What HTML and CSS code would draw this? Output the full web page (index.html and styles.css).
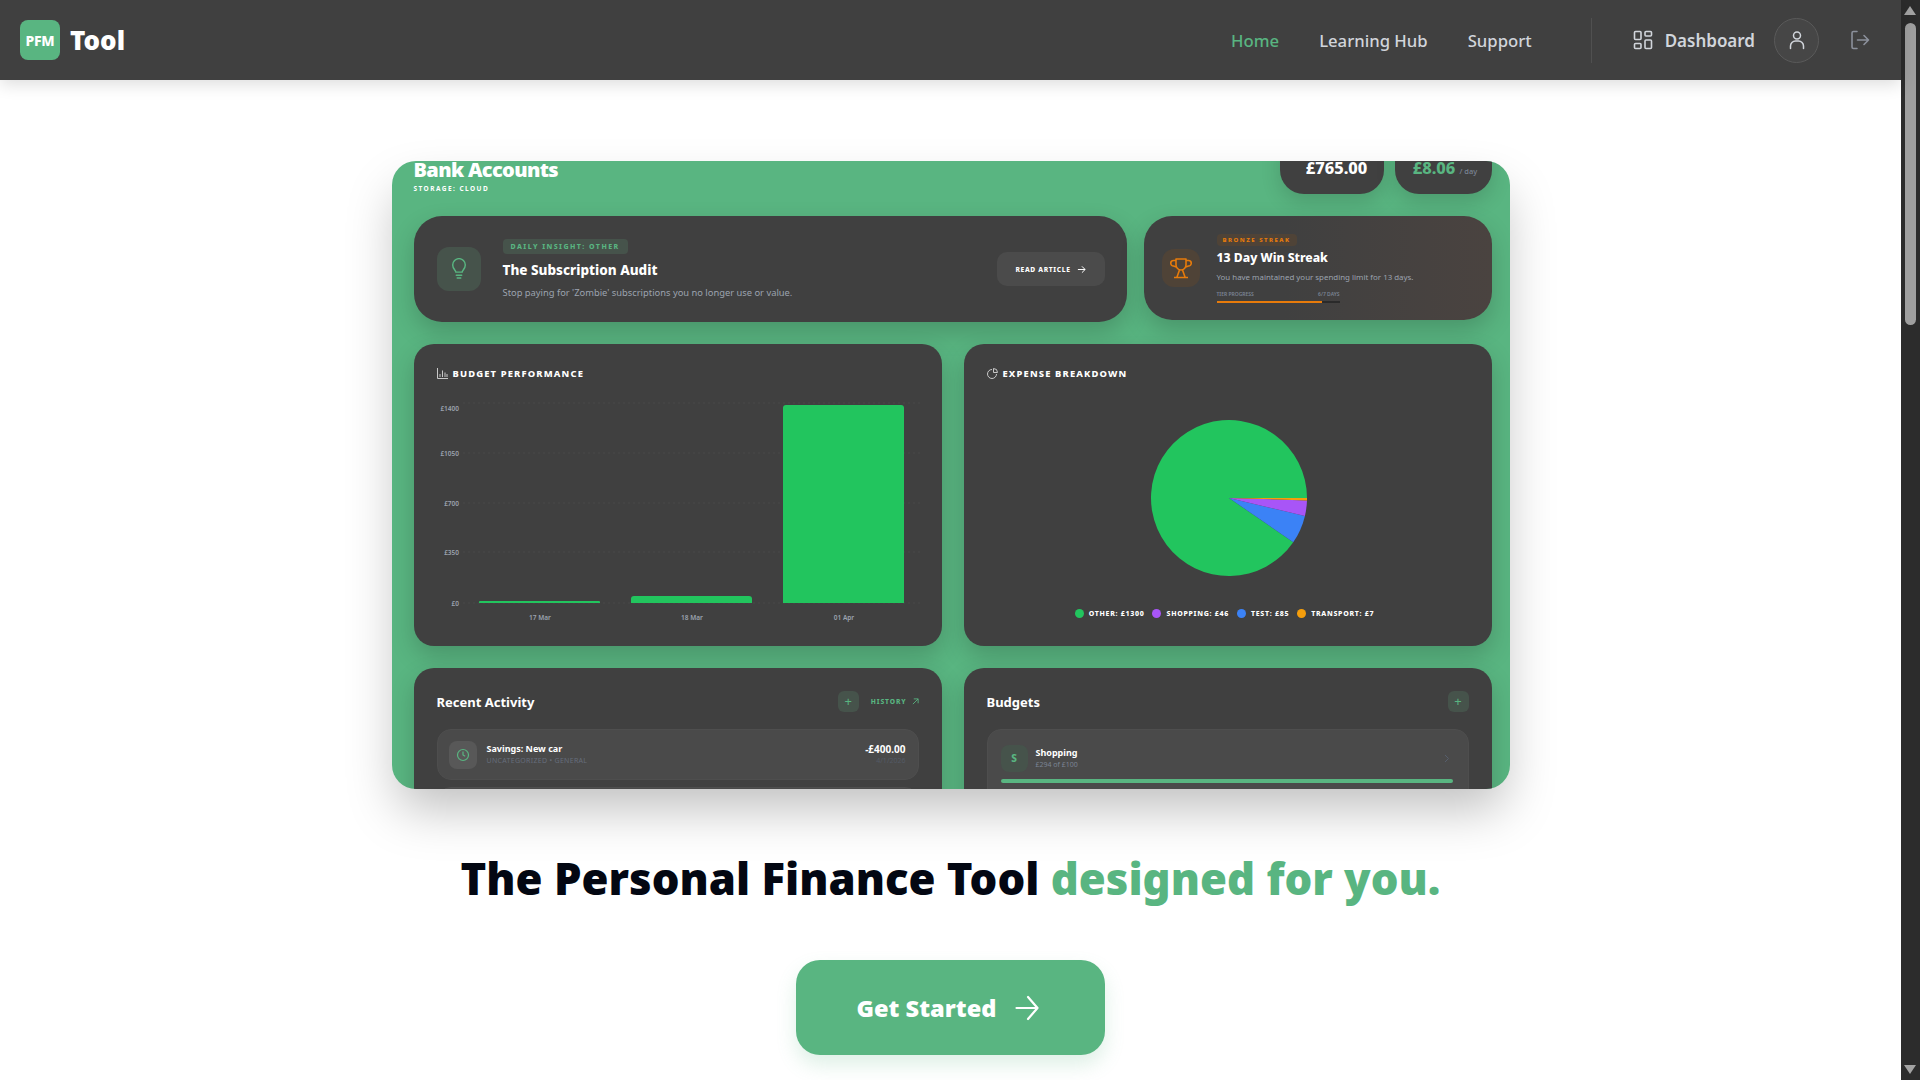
FILE: index.html
```html
<!DOCTYPE html>
<html lang="en">
<head>
    <meta charset="UTF-8">
    <meta name="viewport" content="width=device-width, initial-scale=1.0">
    <title>PFM Tool</title>
    <link rel="stylesheet" href="styles.css">
</head>
<body>
    <div class="page">
        <nav class="nav">
            <div class="brand">
                <div class="brand-logo">PFM</div>
                <span class="brand-name">Tool</span>
            </div>
            <div class="nav-links">
                <a class="nav-link active">Home</a>
                <a class="nav-link">Learning Hub</a>
                <a class="nav-link">Support</a>
            </div>
            <div class="nav-divider"></div>
            <a class="nav-dashboard">
                <svg width="20" height="20" viewBox="0 0 20 20" fill="none" stroke="currentColor" stroke-width="1.6"><rect x="1.5" y="1.5" width="6.5" height="8" rx="1"/><rect x="12" y="1.5" width="6.5" height="4.5" rx="1"/><rect x="12" y="10" width="6.5" height="8.5" rx="1"/><rect x="1.5" y="13.5" width="6.5" height="5" rx="1"/></svg>
                Dashboard
            </a>
            <div class="nav-avatar">
                <svg width="20" height="20" viewBox="0 0 20 20" fill="none" stroke="currentColor" stroke-width="1.5" stroke-linecap="round"><circle cx="10" cy="5.5" r="3.5"/><path d="M3.5 18.5v-2.5a5 5 0 0 1 5-5h3a5 5 0 0 1 5 5v2.5"/></svg>
            </div>
            <svg class="nav-logout" width="20" height="20" viewBox="0 0 20 20" fill="none" stroke="currentColor" stroke-width="1.6" stroke-linecap="round" stroke-linejoin="round"><path d="M7 1.5H3.5a1.5 1.5 0 0 0-1.5 1.5v14a1.5 1.5 0 0 0 1.5 1.5H7"/><path d="M7.5 10h11M14 5.5l4.5 4.5-4.5 4.5"/></svg>
        </nav>

        <main class="hero">
            <section class="preview">
                <header class="preview-head">
                    <div class="preview-title">
                        <h2>Bank Accounts</h2>
                        <p>STORAGE: CLOUD</p>
                    </div>
                    <div class="pill pill-balance">£765.00</div>
                    <div class="pill pill-daily">£8.06 <small>/ day</small></div>
                </header>

                <div class="top-row">
                    <div class="banner insight">
                        <div class="banner-icon">
                            <svg width="18" height="22" viewBox="0 0 20 24" fill="none" stroke="currentColor" stroke-width="1.6" stroke-linecap="round"><path d="M6.5 15.5c0-2-3.500-3.500-3.500-8a7 7 0 0 1 14 0c0 4.500-3.500 6-3.500 8z"/><path d="M7 19h6M8 22h4"/></svg>
                        </div>
                        <div class="banner-text">
                            <span class="tag">DAILY INSIGHT: OTHER</span>
                            <h3>The Subscription Audit</h3>
                            <p>Stop paying for 'Zombie' subscriptions you no longer use or value.</p>
                        </div>
                        <div class="read-btn">READ ARTICLE
                            <svg width="9" height="9" viewBox="0 0 10 10" fill="none" stroke="currentColor" stroke-width="1.1"><path d="M1 5h8M5.500 1.500L9 5 5.500 8.500"/></svg>
                        </div>
                    </div>
                    <div class="banner streak">
                        <div class="banner-icon">
                            <svg width="22" height="22" viewBox="0 0 22 22" fill="none" stroke="currentColor" stroke-width="1.6" stroke-linejoin="round"><path d="M6 2h10v6a5 5 0 0 1-10 0z"/><path d="M6 3.500H3.500a2.200 2.200 0 0 0 0 5.500L6.500 10M16 3.500h2.500a2.200 2.200 0 0 1 0 5.500L15.500 10"/><path d="M9.500 13l-2.500 7M12.500 13l2.500 7M4 20.500h14"/></svg>
                        </div>
                        <div class="banner-text">
                            <span class="tag">BRONZE STREAK</span>
                            <h3>13 Day Win Streak</h3>
                            <p>You have maintained your spending limit for 13 days.</p>
                            <div class="tier">
                                <div class="tier-labels"><span>TIER PROGRESS</span><span>6/7 DAYS</span></div>
                                <div class="tier-track"><div class="tier-fill" style="width: 86%"></div></div>
                            </div>
                        </div>
                    </div>
                </div>

                <div class="card-grid">
                    <div class="card chart-card">
                        <h4 class="card-label">
                            <svg width="11" height="11" viewBox="0 0 11 11" fill="none" stroke="currentColor" stroke-width="1"><path d="M.5 0v10.500H11M3 9V6M5.500 9V2.500M8 9V4.500M10 9V6"/></svg>
                            BUDGET PERFORMANCE
                        </h4>
                        <svg class="bars" width="492" height="240" viewBox="0 0 492 240">
                            <g stroke="#484848" stroke-dasharray="2 3">
                                <path d="M31 8H488M31 58H488M31 108H488M31 157H488M31 208H488"/>
                            </g>
                            <g class="axis-y" text-anchor="end">
                                <text x="27" y="16">£1400</text>
                                <text x="27" y="61">£1050</text>
                                <text x="27" y="111">£700</text>
                                <text x="27" y="160">£350</text>
                                <text x="27" y="211">£0</text>
                            </g>
                            <g fill="#22c55e">
                                <path d="M47 208v-1a1 1 0 0 1 1-1h119a1 1 0 0 1 1 1v1z"/>
                                <path d="M199 208v-4a3 3 0 0 1 3-3h115a3 3 0 0 1 3 3v4z"/>
                                <path d="M351 208V13a3 3 0 0 1 3-3h115a3 3 0 0 1 3 3v195z"/>
                            </g>
                            <g class="axis-x" text-anchor="middle">
                                <text x="108" y="225">17 Mar</text>
                                <text x="260" y="225">18 Mar</text>
                                <text x="412" y="225">01 Apr</text>
                            </g>
                        </svg>
                    </div>

                    <div class="card chart-card">
                        <h4 class="card-label">
                            <svg width="11" height="11" viewBox="0 0 11 11" fill="none" stroke="currentColor" stroke-width="1"><path d="M5 1.500a4.500 4.500 0 1 0 4.500 4.500"/><path d="M6.500.5a4 4 0 0 1 4 4h-4z"/></svg>
                            EXPENSE BREAKDOWN
                        </h4>
                        <div class="pie-wrap">
                            <svg width="156" height="156" viewBox="0 0 156 156">
                                <path fill="#22c55e" d="M78 78L142.240 122.240A78 78 0 1 1 156 78z"/>
                                <path fill="#3b82f6" d="M78 78L153.920 95.910A78 78 0 0 1 142.240 122.240z"/>
                                <path fill="#a855f7" d="M78 78L155.960 80.380A78 78 0 0 1 153.920 95.910z"/>
                                <path fill="#f59e0b" d="M78 78L156 78A78 78 0 0 1 155.960 80.380z"/>
                            </svg>
                        </div>
                        <div class="legend">
                            <span class="legend-item"><i class="dot dot-green"></i>OTHER: £1300</span>
                            <span class="legend-item"><i class="dot dot-purple"></i>SHOPPING: £46</span>
                            <span class="legend-item"><i class="dot dot-blue"></i>TEST: £85</span>
                            <span class="legend-item"><i class="dot dot-orange"></i>TRANSPORT: £7</span>
                        </div>
                    </div>

                    <div class="card list-card">
                        <div class="list-head">
                            <h4>Recent Activity</h4>
                            <div class="add-btn">+</div>
                            <span class="history">HISTORY
                                <svg width="7" height="7" viewBox="0 0 8 8" fill="none" stroke="currentColor" stroke-width="1"><path d="M1 7l6-6M2 1h5v5"/></svg>
                            </span>
                        </div>
                        <div class="row">
                            <div class="row-icon">
                                <svg width="14" height="14" viewBox="0 0 14 14" fill="none" stroke="currentColor" stroke-width="1.2"><circle cx="7" cy="7" r="5.500"/><path d="M7 3.500V7l2.200 1.200"/></svg>
                            </div>
                            <div class="row-text">
                                <strong>Savings: New car</strong>
                                <span>UNCATEGORIZED • GENERAL</span>
                            </div>
                            <div class="row-amount">
                                <strong>-£400.00</strong>
                                <span>4/1/2026</span>
                            </div>
                        </div>
                        <div class="row"></div>
                    </div>

                    <div class="card list-card">
                        <div class="list-head">
                            <h4>Budgets</h4>
                            <div class="add-btn">+</div>
                        </div>
                        <div class="budget">
                            <div class="budget-top">
                                <div class="budget-icon">S</div>
                                <div class="budget-text">
                                    <strong>Shopping</strong>
                                    <span>£294 of £100</span>
                                </div>
                                <svg class="chevron" width="6" height="9" viewBox="0 0 6 9" fill="none" stroke="currentColor" stroke-width="1"><path d="M1 1l3.500 3.500L1 8"/></svg>
                            </div>
                            <div class="budget-bar"></div>
                        </div>
                    </div>
                </div>
            </section>

            <h1 class="headline">The Personal Finance Tool <span>designed for you.</span></h1>

            <a class="cta">Get Started
                <svg width="24" height="26" viewBox="0 0 24 26" fill="none" stroke="currentColor" stroke-width="2.200" stroke-linecap="round" stroke-linejoin="round"><path d="M1.500 13h21M13 2l9.500 11L13 24"/></svg>
            </a>
        </main>
    </div>

    <div class="scrollbar">
        <div class="scroll-up"></div>
        <div class="scroll-thumb"></div>
        <div class="scroll-down"></div>
    </div>
</body>
</html>
```
FILE: styles.css
```css
html, body {
    height: 100%;
}
body {
    margin: 0;
    display: flex;
    overflow: hidden;
    background: #fff;
    color: #fff;
    font-family: "Noto Sans", "Open Sans", Arial, sans-serif;
}
h1, h2, h3, h4, p {
    margin: 0;
}
.page {
    flex: 1;
    min-width: 0;
}

/* top bar */
.nav {
    position: relative;
    z-index: 2;
    height: 80px;
    display: flex;
    align-items: center;
    padding: 0 31px 0 20px;
    background: #404040;
    box-shadow: 0 4px 16px rgba(0, 0, 0, 0.14);
}
.brand {
    display: flex;
    align-items: center;
    gap: 10px;
    margin-right: auto;
}
.brand-logo {
    width: 40px;
    height: 40px;
    border-radius: 8px;
    background: #59b581;
    display: flex;
    align-items: center;
    justify-content: center;
    font-size: 14px;
    font-weight: 800;
    letter-spacing: -0.3px;
}
.brand-name {
    font-size: 26px;
    font-weight: 900;
}
.nav-links {
    display: flex;
    gap: 40px;
}
.nav-link {
    font-size: 16.7px;
    font-weight: 500;
    color: #d1d5db;
}
.nav-link.active {
    color: #59b581;
}
.nav-divider {
    width: 1px;
    height: 45px;
    margin: 0 41px 0 59px;
    background: #505050;
}
.nav-dashboard {
    display: flex;
    align-items: center;
    gap: 12px;
    font-size: 17px;
    font-weight: 600;
    color: #d1d5db;
}
.nav-avatar {
    width: 45px;
    height: 45px;
    margin-left: 19px;
    border-radius: 50%;
    border: 1px solid #5a5a5a;
    background: #464646;
    box-sizing: border-box;
    display: flex;
    align-items: center;
    justify-content: center;
    color: #d1d5db;
}
.nav-logout {
    margin-left: 31px;
    color: #8b909b;
}

/* hero */
.hero {
    display: flex;
    flex-direction: column;
    align-items: center;
    padding-top: 81px;
}
.preview {
    width: 1118px;
    height: 628px;
    box-sizing: border-box;
    padding: 0 18px 0 22px;
    overflow: hidden;
    border-radius: 24px;
    background: #59b581;
    box-shadow: 0 25px 50px -5px rgba(0, 0, 0, 0.25);
}
.preview-head {
    display: flex;
    align-items: flex-start;
    gap: 11px;
    height: 55px;
    margin-bottom: 22px;
    margin-top: -22px;
}
.preview-title {
    margin-right: auto;
    padding-top: 17px;
}
.preview-title h2 {
    font-size: 20px;
    line-height: 28px;
    font-weight: 900;
    letter-spacing: -0.65px;
}
.preview-title p {
    margin-top: 0;
    font-size: 6.5px;
    line-height: 9px;
    font-weight: 700;
    letter-spacing: 1.45px;
}
.pill {
    height: 55px;
    box-sizing: border-box;
    padding-top: 17px;
    border-radius: 0 0 24px 24px;
    background: #404040;
    font-size: 16.4px;
    line-height: 24px;
    font-weight: 800;
    text-align: center;
    box-shadow: 0 8px 20px rgba(0, 0, 0, 0.14);
}
.pill-balance {
    width: 104px;
    padding-left: 10px;
}
.pill-daily {
    width: 97px;
    padding-left: 4px;
    color: #59b581;
}
.pill small {
    font-size: 7.5px;
    font-weight: 500;
    color: #7b8494;
}

/* banners */
.top-row {
    display: flex;
    align-items: flex-start;
    gap: 17px;
    margin-bottom: 22px;
}
.banner {
    display: flex;
    align-items: center;
    box-sizing: border-box;
    border-radius: 28px;
    background: #404040;
    box-shadow: 0 10px 24px rgba(0, 0, 0, 0.18);
}
.insight {
    width: 713px;
    height: 106px;
    padding: 0 22px 0 23px;
    gap: 22px;
}
.streak {
    width: 348px;
    height: 104px;
    padding: 0 18px;
    gap: 17px;
    background: linear-gradient(90deg, #404040 40%, #4a4340 100%);
}
.banner-icon {
    flex: none;
    width: 44px;
    height: 44px;
    border-radius: 12px;
    background: #46534b;
    color: #59b581;
    display: flex;
    align-items: center;
    justify-content: center;
}
.streak .banner-icon {
    width: 38px;
    height: 38px;
    background: #4f4337;
    color: #e77b0b;
}
.banner-text {
    flex: 1;
    min-width: 0;
}
.tag {
    display: block;
    width: fit-content;
    padding: 0 8px;
    height: 15px;
    line-height: 15px;
    border-radius: 4px;
    background: #46534b;
    color: #59b581;
    font-size: 7px;
    font-weight: 800;
    letter-spacing: 1.45px;
}
.streak .tag {
    height: 12px;
    line-height: 12px;
    padding: 0 6px;
    background: #4f4337;
    color: #e77b0b;
    font-size: 6px;
    letter-spacing: 1.5px;
}
.banner h3 {
    margin-top: 7px;
    font-size: 13.5px;
    line-height: 18px;
    font-weight: 800;
}
.banner p {
    margin-top: 7px;
    font-size: 9.35px;
    line-height: 14px;
    color: #9ca3af;
}
.streak h3 {
    margin-top: 3.5px;
    font-size: 12.2px;
    line-height: 17px;
}
.streak p {
    margin-top: 4.5px;
    font-size: 7.9px;
    line-height: 12px;
}
.tier {
    width: 123px;
    margin-top: 7px;
}
.tier-labels {
    display: flex;
    justify-content: space-between;
    font-size: 5px;
    line-height: 8px;
    font-weight: 600;
    color: #7b8494;
}
.tier-track {
    height: 2px;
    margin-top: 3px;
    background: #2a2a2a;
}
.tier-fill {
    height: 2px;
    background: #e77b0b;
}
.read-btn {
    flex: none;
    width: 108px;
    height: 34px;
    border-radius: 10px;
    background: #4b4b4b;
    display: flex;
    align-items: center;
    justify-content: center;
    gap: 6px;
    font-size: 6.7px;
    font-weight: 800;
    letter-spacing: 0.65px;
}

/* dashboard cards */
.card-grid {
    display: grid;
    grid-template-columns: 528px 528px;
    gap: 22px;
}
.card {
    box-sizing: border-box;
    border-radius: 20px;
    background: #404040;
    box-shadow: 0 10px 24px rgba(0, 0, 0, 0.18);
}
.chart-card {
    height: 302px;
    padding: 22px 18px 0 23px;
}
.card-label {
    display: flex;
    align-items: center;
    gap: 5px;
    height: 14px;
    font-size: 9.4px;
    font-weight: 800;
    letter-spacing: 1.15px;
}
.card-label svg {
    color: #c8c8c8;
}
.bars {
    display: block;
    margin: 15px 0 0 -5px;
}
.bars text {
    font-family: "Noto Sans", Arial, sans-serif;
    font-size: 6.5px;
    font-weight: 600;
    fill: #9ca3af;
}
.pie-wrap {
    display: flex;
    justify-content: center;
    margin-top: 40px;
    padding-right: 3px;
}
.legend {
    display: flex;
    justify-content: center;
    gap: 8px;
    height: 10px;
    margin-top: 32px;
    padding-right: 11px;
}
.legend-item {
    display: flex;
    align-items: center;
    gap: 5px;
    font-size: 7px;
    font-weight: 800;
    letter-spacing: 0.7px;
    white-space: nowrap;
}
.dot {
    width: 9px;
    height: 9px;
    border-radius: 50%;
}
.dot-green { background: #22c55e; }
.dot-purple { background: #a855f7; }
.dot-blue { background: #3b82f6; }
.dot-orange { background: #f59e0b; }

/* lists */
.list-card {
    height: 200px;
    padding: 23px 23px 0;
}
.list-head {
    display: flex;
    align-items: center;
    height: 21px;
    margin-bottom: 17px;
}
.list-head h4 {
    margin-right: auto;
    font-size: 13px;
    font-weight: 700;
}
.add-btn {
    width: 21px;
    height: 21px;
    border-radius: 6px;
    background: #46534b;
    color: #59b581;
    font-size: 13px;
    line-height: 21px;
    text-align: center;
}
.history {
    display: flex;
    align-items: center;
    gap: 5px;
    margin-left: 12px;
    font-size: 6.7px;
    font-weight: 800;
    letter-spacing: 0.9px;
    color: #59b581;
}
.row {
    display: flex;
    align-items: center;
    height: 51px;
    box-sizing: border-box;
    padding: 0 12px 0 11px;
    margin-bottom: 7px;
    border-radius: 14px;
    background: #4a4a4a;
    border: 1px solid #4e4e4e;
}
.row-icon {
    width: 28px;
    height: 28px;
    border-radius: 8px;
    background: #585858;
    color: #59b581;
    display: flex;
    align-items: center;
    justify-content: center;
}
.row-text {
    flex: 1;
    margin-left: 10px;
}
.row strong, .budget strong {
    display: block;
    font-size: 9px;
    line-height: 12px;
    font-weight: 700;
}
.row-text span {
    display: block;
    font-size: 7px;
    line-height: 11px;
    color: #666d7b;
    letter-spacing: 0.3px;
}
.row-amount {
    text-align: right;
}
.row-amount strong {
    font-size: 10px;
}
.row-amount span {
    display: block;
    font-size: 7px;
    line-height: 11px;
    color: #545a66;
}
.budget {
    box-sizing: border-box;
    height: 90px;
    padding: 15px 15px 0 13px;
    border-radius: 14px;
    background: #4a4a4a;
    border: 1px solid #4e4e4e;
}
.budget-top {
    display: flex;
    align-items: center;
}
.budget-icon {
    width: 27px;
    height: 27px;
    border-radius: 8px;
    background: #46534b;
    color: #59b581;
    font-size: 10px;
    font-weight: 800;
    line-height: 27px;
    text-align: center;
}
.budget-text {
    flex: 1;
    margin-left: 8px;
    margin-top: -1px;
}
.budget-text span {
    display: block;
    font-size: 7px;
    line-height: 11px;
    color: #7b8494;
}
.chevron {
    color: #565e6c;
    margin-right: 3px;
}
.budget-bar {
    height: 4px;
    margin-top: 7px;
    border-radius: 2px;
    background: #59b581;
}

/* headline and button */
.headline {
    margin-top: 61px;
    font-size: 43.7px;
    line-height: 56px;
    font-weight: 900;
    color: #030712;
    white-space: nowrap;
}
.headline span {
    color: #59b581;
}
.cta {
    display: flex;
    align-items: center;
    justify-content: center;
    gap: 19px;
    width: 309px;
    height: 95px;
    box-sizing: border-box;
    padding-right: 5px;
    margin-top: 54px;
    border-radius: 24px;
    background: #59b581;
    font-size: 23.6px;
    font-weight: 900;
    box-shadow: 0 10px 20px rgba(89, 181, 129, 0.2);
}

/* window scrollbar */
.scrollbar {
    flex: none;
    width: 19px;
    height: 1080px;
    position: relative;
    background: #2c2c2c;
}
.scroll-up, .scroll-down {
    position: absolute;
    left: 3px;
    width: 0;
    height: 0;
    border-left: 6px solid transparent;
    border-right: 6px solid transparent;
}
.scroll-up {
    top: 6px;
    border-bottom: 9px solid #a3a3a3;
}
.scroll-down {
    bottom: 6px;
    border-top: 9px solid #a3a3a3;
}
.scroll-thumb {
    position: absolute;
    top: 23px;
    left: 4px;
    width: 11px;
    height: 302px;
    border-radius: 6px;
    background: #9f9f9f;
}
```
